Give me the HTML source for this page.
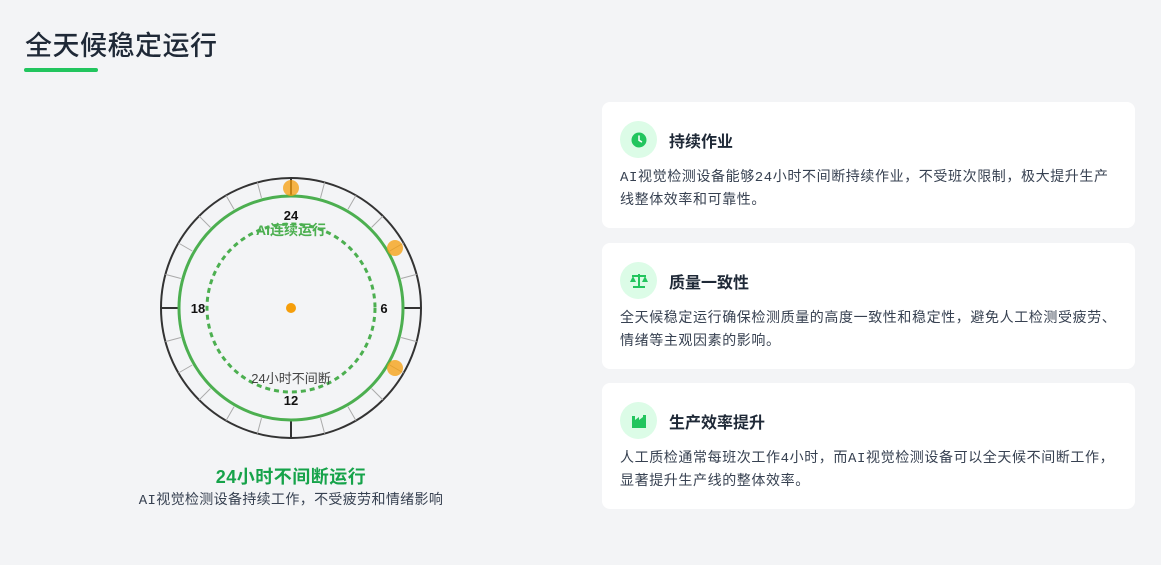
<!DOCTYPE html>
<html><head><meta charset="utf-8"><style>
*{margin:0;padding:0;box-sizing:border-box}
body{width:1161px;height:565px;background:#f3f4f6;font-family:"Liberation Sans","Noto Sans CJK SC",sans-serif;position:relative;overflow:hidden;color:#1f2937}
h1{position:absolute;left:25px;top:24px;font-size:27px;font-weight:500;color:#1f2937;letter-spacing:0.5px}
.ul{position:absolute;left:24px;top:68px;width:74px;height:4px;background:#22c55e;border-radius:2px}
.card{position:absolute;left:602px;width:533px;height:126px;background:#fff;border-radius:8px}
.ic{position:absolute;left:18px;top:19px;width:37px;height:37px;border-radius:50%;background:#dcfce7;display:flex;align-items:center;justify-content:center}
.t{position:absolute;left:67px;top:26px;font-size:16px;font-weight:bold;color:#1f2937}
.d{position:absolute;left:18px;top:65px;width:515px;white-space:nowrap;font-size:14px;letter-spacing:0.6px;line-height:23px;color:#374151;font-family:"Liberation Mono","Noto Sans CJK SC",monospace}
.cap1{position:absolute;left:0;width:582px;text-align:center;top:463px;font-size:18px;letter-spacing:0.5px;font-weight:bold;color:#16a34a}
.cap2{position:absolute;left:0;width:582px;text-align:center;top:489px;font-size:14px;letter-spacing:0.35px;color:#374151;font-family:"Liberation Mono","Noto Sans CJK SC",monospace}
</style></head><body>
<h1>全天候稳定运行</h1><div class="ul"></div>
<svg style="position:absolute;left:0;top:0" width="582" height="565">
<g transform="translate(291,308)">
<circle r="130" fill="none" stroke="#333" stroke-width="2"/>
<g stroke="#aaa" stroke-width="1">
<line y1="-130" y2="-114" transform="rotate(15)"/><line y1="-130" y2="-114" transform="rotate(30)"/><line y1="-130" y2="-114" transform="rotate(45)"/><line y1="-130" y2="-114" transform="rotate(60)"/><line y1="-130" y2="-114" transform="rotate(75)"/>
<line y1="-130" y2="-114" transform="rotate(105)"/><line y1="-130" y2="-114" transform="rotate(120)"/><line y1="-130" y2="-114" transform="rotate(135)"/><line y1="-130" y2="-114" transform="rotate(150)"/><line y1="-130" y2="-114" transform="rotate(165)"/>
<line y1="-130" y2="-114" transform="rotate(195)"/><line y1="-130" y2="-114" transform="rotate(210)"/><line y1="-130" y2="-114" transform="rotate(225)"/><line y1="-130" y2="-114" transform="rotate(240)"/><line y1="-130" y2="-114" transform="rotate(255)"/>
<line y1="-130" y2="-114" transform="rotate(285)"/><line y1="-130" y2="-114" transform="rotate(300)"/><line y1="-130" y2="-114" transform="rotate(315)"/><line y1="-130" y2="-114" transform="rotate(330)"/><line y1="-130" y2="-114" transform="rotate(345)"/>
</g>
<g stroke="#333" stroke-width="2">
<line y1="-130" y2="-112"/><line y1="130" y2="112"/><line x1="-130" x2="-112"/><line x1="130" x2="112"/>
</g>
<circle r="112" fill="none" stroke="#4caf50" stroke-width="3"/>
<circle r="84" fill="none" stroke="#4caf50" stroke-width="3" stroke-dasharray="5,4"/>
<g fill="#f59e0b" fill-opacity="0.75">
<circle cx="0" cy="-120" r="8"/><circle cx="104" cy="-60" r="8"/><circle cx="104" cy="60" r="8"/>
</g>
<circle r="5" fill="#f59e0b"/>
<g font-family="Liberation Sans,sans-serif" font-weight="bold" font-size="13" fill="#111" text-anchor="middle">
<text x="0" y="-88">24</text><text x="0" y="97">12</text><text x="93" y="5">6</text><text x="-93" y="5">18</text>
</g>
<text x="0" y="-73" text-anchor="middle" font-size="14" font-weight="bold" fill="#4caf50" font-family="Liberation Sans,Noto Sans CJK SC,sans-serif">AI连续运行</text>
<text x="0" y="75" text-anchor="middle" font-size="13" fill="#444" font-family="Liberation Sans,Noto Sans CJK SC,sans-serif">24小时不间断</text>
</g></svg>
<div class="cap1">24小时不间断运行</div>
<div class="cap2">AI视觉检测设备持续工作，不受疲劳和情绪影响</div>

<div class="card" style="top:102px"><div class="ic"><svg width="16" height="16" viewBox="0 0 16 16"><circle cx="8" cy="8" r="7.5" fill="#22c55e"/><path d="M8 4v4.3l2.5 1.5" stroke="#fff" stroke-width="1.5" fill="none" stroke-linecap="round"/></svg></div><div class="t">持续作业</div><div class="d">AI视觉检测设备能够24小时不间断持续作业，不受班次限制，极大提升生产<br>线整体效率和可靠性。</div></div>
<div class="card" style="top:243px"><div class="ic"><svg width="20" height="16" viewBox="0 0 20 16"><path d="M10 1v13M4 14h12M3 3h14" stroke="#22c55e" stroke-width="2" fill="none"/><path d="M1 9l3-6 3 6zM13 9l3-6 3 6z" fill="#22c55e"/></svg></div><div class="t">质量一致性</div><div class="d">全天候稳定运行确保检测质量的高度一致性和稳定性，避免人工检测受疲劳、<br>情绪等主观因素的影响。</div></div>
<div class="card" style="top:383px"><div class="ic"><svg width="16" height="14" viewBox="0 0 16 14"><path d="M1 14V2h3v4l4-3v3l4-3V1h3v13z" fill="#22c55e"/></svg></div><div class="t">生产效率提升</div><div class="d">人工质检通常每班次工作4小时，而AI视觉检测设备可以全天候不间断工作，<br>显著提升生产线的整体效率。</div></div>
</body></html>
